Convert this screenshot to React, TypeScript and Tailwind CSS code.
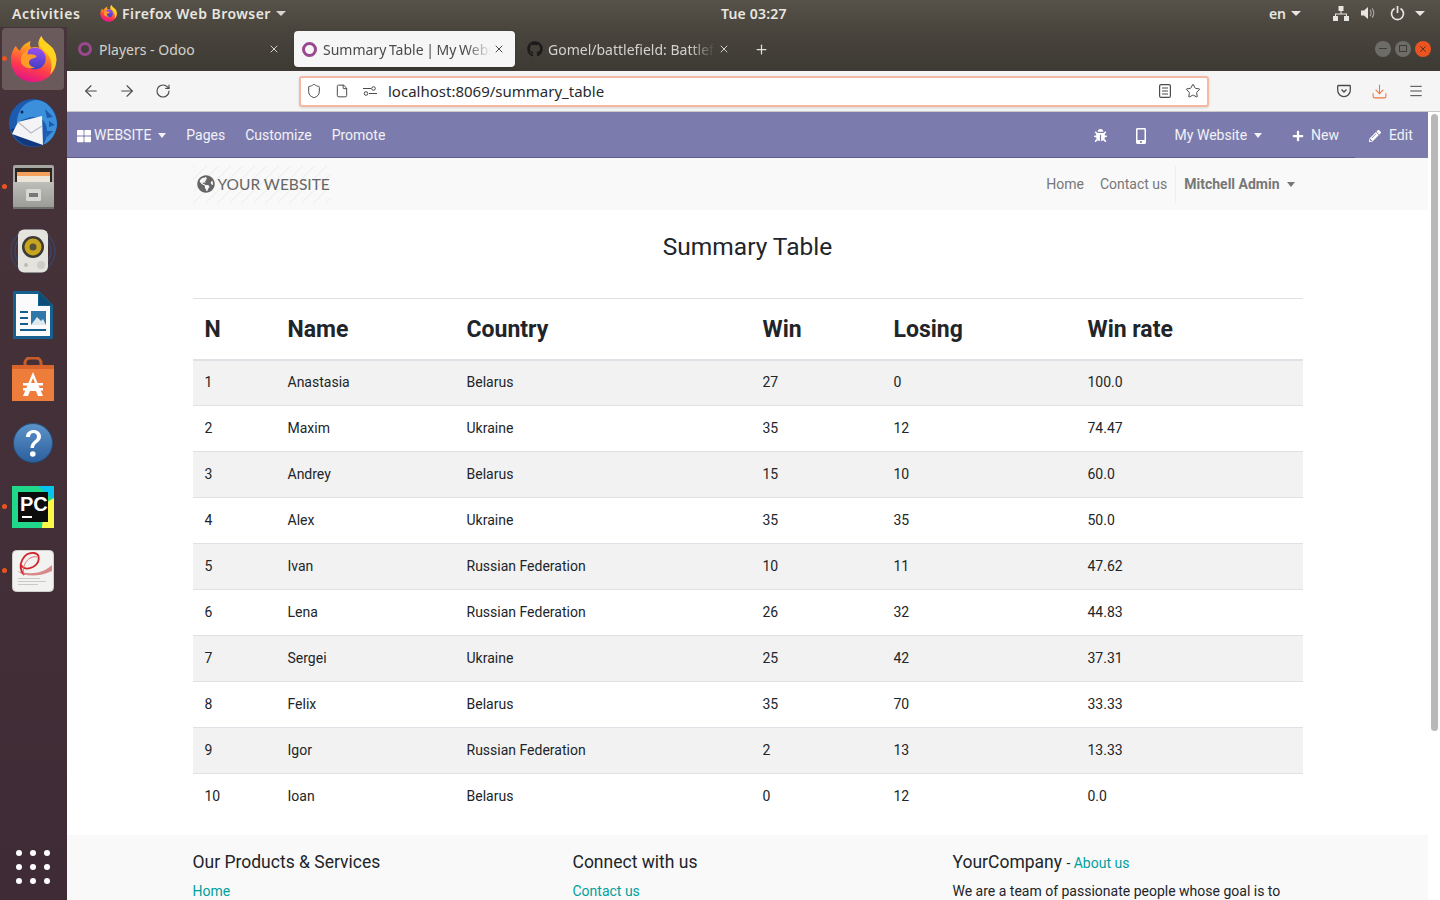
import { ArrowLeft, ArrowRight, RotateCw, Star, Menu, Plus, X, Shield, File, Download } from "lucide-react";
import { FaBug, FaGithub, FaGlobeAmericas, FaMobileAlt, FaPencilAlt, FaPlus, FaThLarge } from "react-icons/fa";

const rows = [
  ["1", "Anastasia", "Belarus", "27", "0", "100.0"],
  ["2", "Maxim", "Ukraine", "35", "12", "74.47"],
  ["3", "Andrey", "Belarus", "15", "10", "60.0"],
  ["4", "Alex", "Ukraine", "35", "35", "50.0"],
  ["5", "Ivan", "Russian Federation", "10", "11", "47.62"],
  ["6", "Lena", "Russian Federation", "26", "32", "44.83"],
  ["7", "Sergei", "Ukraine", "25", "42", "37.31"],
  ["8", "Felix", "Belarus", "35", "70", "33.33"],
  ["9", "Igor", "Russian Federation", "2", "13", "13.33"],
  ["10", "Ioan", "Belarus", "0", "12", "0.0"],
];

const headers = ["N", "Name", "Country", "Win", "Losing", "Win rate"];
const colWidths = ["w-[83px]", "w-[179px]", "w-[296px]", "w-[131px]", "w-[194px]", "w-[227px]"];

function Caret({ className = "", wide = false }: { className?: string; wide?: boolean }) {
  const size = wide ? "border-x-[5px] border-t-[5px]" : "border-x-[4.5px] border-t-[5px]";
  return <span className={`inline-block w-0 h-0 border-x-transparent border-t-current ${size} ${className}`} />;
}

function FirefoxLogo({ size, id }: { size: number; id: string }) {
  return (
    <svg width={size} height={size} viewBox="0 0 48 48">
      <defs>
        <linearGradient id={`${id}a`} x1="0.75" y1="0" x2="0.4" y2="1">
          <stop offset="0" stopColor="#ffe226" />
          <stop offset="0.35" stopColor="#ff9a1f" />
          <stop offset="0.7" stopColor="#ff3d4a" />
          <stop offset="1" stopColor="#e31587" />
        </linearGradient>
        <linearGradient id={`${id}b`} x1="0.5" y1="0" x2="0.4" y2="1">
          <stop offset="0" stopColor="#9a4ff0" />
          <stop offset="1" stopColor="#3f3fc0" />
        </linearGradient>
      </defs>
      <path
        d="M1 25C1 18 3 14 6 10 7 12 8 14 10 15 12 10 16 7 21 5 20 8 20 11 22 12 24 11 27 11 30 12 28 8 29 4 32 0 34 6 40 8 44 13 47 18 48 23 47 28 46 39 36 47 24 47 11 47 1 37 1 25Z"
        fill={`url(#${id}a)`}
      />
      <path d="M32 0c2 6 8 8 12 13 3 5 4 10 3 15-1 4-3 8-6 11 2-6 2-13-1-18-2-4-7-6-9-11-1-3 0-7 1-10z" fill="#ffd21f" />
      <circle cx="25.500" cy="23" r="11" fill={`url(#${id}b)`} />
      <path d="M11 25c0-6 4-10 9-12-2 2-2 5-2 6 3-1 9 0 9 2-1 2-6 2-7 4-2 3 1 7 6 7-7 3-15-1-15-7z" fill="#ff9b26" />
    </svg>
  );
}

function DockIcon({ name }: { name: string }) {
  if (name === "firefox") return <FirefoxLogo size={47} id="dockff" />;
  if (name === "thunderbird")
    return (
      <svg width="48" height="48" viewBox="0 0 48 48">
        <circle cx="24" cy="24" r="24" fill="#1c5bb0" />
        <path d="M8 24C8 10 18 1 28 1c10 1 19 11 20 23 0 10-6 19-14 22 4-6 5-13 3-20C34 18 24 14 8 24z" fill="#3c8fdb" />
        <path d="M36 10l8 8-6 1zM40 22l6 4-6 2zM38 32l6 0-6 6z" fill="#1c5bb0" />
        <path d="M2 30c2 8 9 15 18 17 6 1 12 0 16-2-10 0-22-5-29-16z" fill="#12397e" />
        <path d="M3 35l6-12 24-6 1 29z" fill="#f4f4f6" />
        <path d="M9 23l13 11 11-7" fill="none" stroke="#b9bcc8" strokeWidth="1.300" />
        <circle cx="13" cy="13" r="1.500" fill="#0e2a5a" />
      </svg>
    );
  if (name === "files")
    return (
      <svg width="41" height="44" viewBox="0 0 41 44">
        <defs>
          <linearGradient id="cab" x1="0" y1="0" x2="0" y2="1">
            <stop offset="0" stopColor="#bdbdba" />
            <stop offset="1" stopColor="#9a9a97" />
          </linearGradient>
        </defs>
        <rect width="41" height="43" rx="2" fill="#a5a5a2" />
        <rect x="2" y="3" width="37" height="14" fill="#2a2520" />
        <rect x="4" y="7" width="33" height="4" fill="#f5a05a" />
        <rect x="4" y="11" width="33" height="6" fill="#ece4d6" />
        <rect y="17" width="41" height="26" fill="url(#cab)" />
        <rect x="13" y="24" width="15" height="12" rx="1.500" fill="#d7d7d4" />
        <rect x="16" y="28" width="9" height="4" fill="#77777a" />
        <rect y="42" width="41" height="2" fill="#6e6e6c" />
      </svg>
    );
  if (name === "speaker")
    return (
      <svg width="50" height="44" viewBox="0 0 50 44">
        <circle cx="25" cy="22" r="22" fill="none" stroke="#3a4a6c" strokeWidth="1.500" opacity="0.7" />
        <circle cx="25" cy="22" r="18" fill="none" stroke="#3a4a6c" strokeWidth="1.500" opacity="0.8" />
        <rect x="10" y="0.500" width="30" height="43" rx="6" fill="#e5e3de" />
        <circle cx="25" cy="18" r="11" fill="#3c3a33" />
        <circle cx="25" cy="18" r="8.500" fill="#c7a51f" />
        <circle cx="25" cy="18" r="3.500" fill="#57523a" />
        <circle cx="33" cy="36" r="4" fill="#cfcdc8" />
        <circle cx="18" cy="36" r="2" fill="#bdbbb5" />
      </svg>
    );
  if (name === "writer")
    return (
      <svg width="40" height="48" viewBox="0 0 40 48">
        <path d="M0 0h26l14 14v34H0z" fill="#15608f" />
        <path d="M3 3h22v12h12v30H3z" fill="#fbfbfb" />
        <path d="M26 1l13 13H26z" fill="#0d4e79" />
        <rect x="7" y="20" width="8" height="2" fill="#15608f" />
        <rect x="7" y="26" width="8" height="2" fill="#15608f" />
        <rect x="7" y="32" width="8" height="2" fill="#15608f" />
        <rect x="7" y="38" width="26" height="2" fill="#15608f" />
        <rect x="18" y="20" width="15" height="14" fill="#2f78a8" />
        <path d="M18 34l6-8 4 4 2-2 3 6z" fill="#dfe9ef" />
      </svg>
    );
  if (name === "store")
    return (
      <svg width="42" height="44" viewBox="0 0 42 44">
        <path d="M13 10V6a5 5 0 0 1 5-5h6a5 5 0 0 1 5 5v4" fill="none" stroke="#c85d2c" strokeWidth="3" />
        <path d="M0 8h42v36H0z" fill="#ee7c3b" />
        <path d="M0 8h42v4H0z" fill="#d9652c" />
        <path d="M21 15l-10 24h5l2-5h6l2 5h5z" fill="#fff" />
        <rect x="11" y="26" width="20" height="2.500" fill="#fff" />
        <rect x="11" y="31" width="20" height="2.500" fill="#fff" />
        <path d="M21 21l-2 5h4z" fill="#ee7c3b" />
      </svg>
    );
  if (name === "help")
    return (
      <svg width="40" height="40" viewBox="0 0 40 40">
        <defs>
          <linearGradient id="hlp" x1="0" y1="0" x2="0" y2="1">
            <stop offset="0" stopColor="#5c93c8" />
            <stop offset="1" stopColor="#2c5f9e" />
          </linearGradient>
        </defs>
        <circle cx="20" cy="20" r="19.500" fill="url(#hlp)" stroke="#23507f" />
        <path d="M13 14c0-5 4-7 7.500-7 4 0 7.500 2.500 7.500 6.500 0 6-7 6-7 11.500h-3.500c0-7 6.500-7 6.500-11.500 0-2-1.500-3.500-3.500-3.500-2.500 0-3.500 2-3.500 4z" fill="#fff" />
        <circle cx="19.800" cy="31" r="2.800" fill="#fff" />
      </svg>
    );
  if (name === "pycharm")
    return (
      <svg width="42" height="42" viewBox="0 0 42 42">
        <rect width="42" height="42" fill="#21d789" />
        <path d="M26 0h16v14z" fill="#07c3f2" />
        <path d="M30 42h12V12l-10 6z" fill="#fcf84a" />
        <rect x="6" y="6" width="30" height="30" fill="#0c0c0c" />
        <text x="8" y="25" fontFamily="Liberation Sans, sans-serif" fontWeight="700" fontSize="20" fill="#fff">PC</text>
        <rect x="10" y="30" width="10" height="2" fill="#fff" />
      </svg>
    );
  return (
    <svg width="42" height="42" viewBox="0 0 42 42">
      <rect x="0.500" y="0.500" width="41" height="41" rx="4" fill="#f2f2f0" stroke="#cfcfcc" />
      <path d="M40 15C30 24 18 25 5 21c8 6 22 6 35 0z" fill="#d8898a" />
      <path d="M12 25C4 15 12 2 22 3c7 1 6 10-1 14-6 3-10 1-12-2" fill="none" stroke="#d0262c" strokeWidth="1.800" />
      <path d="M12 25c-3-10 5-20 13-18" fill="none" stroke="#e26a6a" strokeWidth="1" />
      <rect x="6" y="28" width="22" height="1" fill="#c9c9c6" />
      <rect x="6" y="31" width="28" height="1" fill="#c9c9c6" />
      <rect x="6" y="34" width="20" height="1" fill="#c9c9c6" />
    </svg>
  );
}

const dockItems = [
  { name: "firefox", run: true, active: true },
  { name: "thunderbird", run: false, active: false },
  { name: "files", run: true, active: false },
  { name: "speaker", run: false, active: false },
  { name: "writer", run: false, active: false },
  { name: "store", run: false, active: false },
  { name: "help", run: false, active: false },
  { name: "pycharm", run: true, active: false },
  { name: "evince", run: true, active: false },
];

function Dock() {
  return (
    <aside className="w-[67px] shrink-0 bg-gradient-to-b from-[#47343a] to-[#3f2b35] flex flex-col pb-[16px]">
      {dockItems.map((item) => (
        <div key={item.name} className="relative w-full h-[64px] flex items-center justify-center pr-[1px]">
          {item.active && <div className="absolute left-[2px] top-[1px] w-[62px] h-[62px] rounded bg-[#6b5a5b]" />}
          {item.run && <span className="absolute left-[2px] top-[29px] w-[5px] h-[5px] rounded-full bg-[#e95420]" />}
          <div className="relative flex items-center justify-center">
            <DockIcon name={item.name} />
          </div>
        </div>
      ))}
      <div className="mt-auto ml-[16px] grid grid-cols-[6px_6px_6px] gap-[8px]">
        {Array.from({ length: 9 }).map((_, i) => (
          <span key={i} className="w-[6px] h-[6px] rounded-full bg-white" />
        ))}
      </div>
    </aside>
  );
}

function TopBar() {
  return (
    <header className="h-[27px] shrink-0 flex items-center bg-gradient-to-b from-[#57534a] to-[#4a463e] text-[#e8e6e0] text-[14px] font-semibold font-['Noto_Sans',sans-serif] pb-[1px]">
      <span className="ml-[12px] w-[88px] tracking-[0.6px]">Activities</span>
      <FirefoxLogo size={17} id="barff" />
      <span className="ml-[5px] tracking-[0.45px]">Firefox Web Browser</span>
      <Caret wide className="ml-[5px] text-[#d8d6d0]" />
      <span className="absolute left-[721px] top-[3px] text-[14px] tracking-[0.2px]">Tue 03:27</span>
      <div className="ml-auto flex items-center pr-[15px]">
        <span>en</span>
        <Caret wide className="ml-[5px] mr-[32px]" />
        <svg width="16" height="15" viewBox="0 0 16 15" fill="#e8e6e0">
          <rect x="5.500" y="0" width="5" height="5" />
          <rect x="0" y="10" width="5" height="5" />
          <rect x="11" y="10" width="5" height="5" />
          <path d="M7.500 5h1v2.500H14V10h-1V8.500H3V10H2V7.500h5.500z" />
        </svg>
        <svg className="ml-[12px]" width="15" height="14" viewBox="0 0 15 14" fill="#e8e6e0">
          <path d="M0 4.500h3L7 1v12L3 9.500H0z" />
          <path d="M9 4c1.500 1.500 1.500 4.500 0 6M11 2.500c2.500 2.500 2.500 6.500 0 9" fill="none" stroke="#a5a39c" strokeWidth="1.200" />
        </svg>
        <svg className="ml-[14px]" width="15" height="15" viewBox="0 0 15 15" fill="none" stroke="#e8e6e0" strokeWidth="1.700">
          <path d="M4.500 2.500a6 6 0 1 0 6 0M7.500 0v7" />
        </svg>
        <Caret wide className="ml-[10px]" />
      </div>
    </header>
  );
}

function Tabs() {
  return (
    <div className="h-[44px] shrink-0 bg-gradient-to-b from-[#4a463e] to-[#3d3a34] flex items-center font-['Noto_Sans',sans-serif] text-[14px]">
      <div className="w-[227px] h-[36px] flex items-center pl-[11px] pr-[14px] text-[#d4d2cc]">
        <span className="w-[14px] h-[14px] rounded-full border-[3px] border-[#98498f] shrink-0" />
        <span className="ml-[7px] flex-1">Players - Odoo</span>
        <X size={12} />
      </div>
      <div className="w-[221px] h-[36px] bg-[#f6f6f6] rounded-[4px] flex items-center pl-[8px] pr-[10px] text-[#4a4a4a] shadow">
        <span className="w-[15px] h-[15px] rounded-full border-[3px] border-[#98498f] shrink-0" />
        <span className="ml-[6px] flex-1 whitespace-nowrap overflow-hidden [word-spacing:-1px] [mask-image:linear-gradient(to_right,black_85%,transparent)]">Summary Table | My Website</span>
        <X size={12} className="ml-[2px] shrink-0" />
      </div>
      <div className="w-[222px] h-[36px] flex items-center pl-[12px] pr-[7px] text-[#d4d2cc]">
        <FaGithub size={16} className="shrink-0 text-[#1b1b1b]" />
        <span className="ml-[5px] flex-1 min-w-0 whitespace-nowrap overflow-hidden [mask-image:linear-gradient(to_right,black_85%,transparent)]">Gomel/battlefield: Battlefield</span>
        <X size={12} className="shrink-0 ml-[3px]" />
      </div>
      <Plus size={15} className="ml-[17px] text-[#e0ded8]" />
      <div className="ml-auto mr-[9px] flex items-center gap-[4px] pb-[1px]">
        <span className="w-[16px] h-[16px] rounded-full bg-[#6e6c66] flex items-center justify-center">
          <span className="w-[8px] h-[1.500px] bg-[#3e3c37]" />
        </span>
        <span className="w-[16px] h-[16px] rounded-full bg-[#6e6c66] flex items-center justify-center">
          <span className="w-[8px] h-[7px] border border-[#3e3c37]" />
        </span>
        <span className="w-[16px] h-[16px] rounded-full bg-[#e95420] flex items-center justify-center">
          <X size={10} strokeWidth={2} className="text-[#4a2a1c]" />
        </span>
      </div>
    </div>
  );
}

function NavBar() {
  return (
    <div className="h-[41px] shrink-0 bg-[#f5f5f5] border-b border-[#c9c9c9] flex items-center text-[#4a4a4f] font-['Noto_Sans',sans-serif]">
      <ArrowLeft size={18} strokeWidth={1.500} className="ml-[15px]" />
      <ArrowRight size={18} strokeWidth={1.500} className="ml-[18px]" />
      <RotateCw size={16} strokeWidth={1.700} className="ml-[19px]" />
      <div className="ml-[128px] w-[910px] shrink-0 h-[31px] bg-white border-2 border-[#f5b8a4] rounded-[3px] flex items-center pl-[5px] pr-[6px] shadow-sm">
        <Shield size={16} strokeWidth={1.500} />
        <File size={14} strokeWidth={1.700} className="ml-[13px]" />
        <svg className="ml-[14px]" width="14" height="10" viewBox="0 0 14 10" fill="none" stroke="#4a4a4f">
          <circle cx="10.500" cy="2.500" r="1.800" />
          <path d="M0 2.500h8M6 7.500h8" />
          <circle cx="3" cy="7.500" r="1.800" />
        </svg>
        <span className="ml-[11px] text-[15px] text-[#2a2a2e]">localhost:8069/summary_table</span>
        <svg className="ml-auto" width="12" height="14" viewBox="0 0 12 14" fill="none" stroke="#4a4a4f" strokeWidth="1.200">
          <rect x="0.600" y="0.600" width="10.800" height="12.800" rx="1.500" />
          <path d="M3 4h6M3 7h6M3 10h6" />
        </svg>
        <Star size={16} strokeWidth={1.500} className="ml-[14px]" />
      </div>
      <div className="ml-auto flex items-center pr-[16px]">
        <svg width="14" height="14" viewBox="0 0 14 14" fill="none" stroke="#4a4a4f" strokeWidth="1.300">
          <path d="M1.500 1.500h11c.5 0 .8.300.8.800v4a6.300 6.300 0 0 1-12.600 0v-4c0-.5.300-.8.800-.8z" />
          <path d="M4.500 5.500L7 8l2.500-2.500" />
        </svg>
        <Download size={17} strokeWidth={1.500} className="ml-[20px] text-[#f0773f]" />
        <Menu size={16} strokeWidth={1.500} className="ml-[20px]" />
      </div>
    </div>
  );
}

function WebsiteBar() {
  return (
    <div className="h-[46px] shrink-0 bg-[#7c7bad] flex text-[14px] text-white/90 font-['Roboto',sans-serif]">
      <div className="flex-1 flex items-center border-b border-[#5d5b8f] pt-[2px] pr-[16px]">
        <FaThLarge size={14} className="ml-[10px] text-white" />
        <span className="ml-[3px]">WEBSITE</span>
        <Caret className="ml-[7px]" />
        <span className="ml-[20px]">Pages</span>
        <span className="ml-[20px]">Customize</span>
        <span className="ml-[20px]">Promote</span>
        <div className="ml-auto flex items-center">
          <FaBug size={13} className="text-white" />
          <FaMobileAlt size={16} className="ml-[26px] text-white" />
          <span className="ml-[26px]">My Website</span>
          <Caret className="ml-[7px]" />
          <FaPlus size={12} className="ml-[30px] text-white" />
          <span className="ml-[7px]">New</span>
        </div>
      </div>
      <div className="w-[73px] flex items-center pl-[14px] pt-[1px]">
        <FaPencilAlt size={12} className="text-white" />
        <span className="ml-[8px]">Edit</span>
      </div>
    </div>
  );
}

function SiteNav() {
  return (
    <nav className="h-[52px] shrink-0 bg-[#f9f9f9] flex items-center text-[14px] text-[#777] font-['Roboto',sans-serif]">
      <div className="w-[1110px] mx-auto flex items-center">
        <div className="h-[37px] w-[138px] flex items-center pl-[4px] bg-[repeating-linear-gradient(135deg,#f1f1f1_0,#f1f1f1_1.5px,transparent_1.5px,transparent_8.5px)]">
          <FaGlobeAmericas size={18} className="text-[#666]" />
          <span className="ml-[3px] pt-[1px] text-[15.500px] text-[#666] font-['Lato',sans-serif] whitespace-nowrap">YOUR WEBSITE</span>
        </div>
        <div className="ml-auto flex items-center">
          <span>Home</span>
          <span className="ml-[16px] pr-[8px]">Contact us</span>
          <span className="h-[37px] border-l border-[#eeeeee] flex items-center pl-[8px] font-bold">Mitchell Admin</span>
          <Caret className="ml-[7px] mr-[8px]" />
        </div>
      </div>
    </nav>
  );
}

function SummaryTable() {
  return (
    <main className="bg-white h-[625px] shrink-0 font-['Roboto',sans-serif] text-[#212529]">
      <div className="w-[1110px] mx-auto">
        <h1 className="text-[24.500px] leading-[29px] text-center pt-[22px] h-[88px]">Summary Table</h1>
        <table className="w-full table-fixed border-collapse text-[14px]">
          <thead>
            <tr className="h-[61px] border-t border-[#dee2e6] border-b-2">
              {headers.map((h, i) => (
                <th key={h} className={`${colWidths[i]} px-[12px] pt-[2px] text-left text-[23px] font-bold`}>
                  {h}
                </th>
              ))}
            </tr>
          </thead>
          <tbody>
            {rows.map((row, i) => (
              <tr key={row[0]} className={`h-[46px] border-t border-[#dee2e6] first:border-t-0 ${i % 2 === 0 ? "bg-[#f2f2f2]" : "bg-white"}`}>
                {row.map((cell, j) => (
                  <td key={j} className="px-[12px]">
                    {cell}
                  </td>
                ))}
              </tr>
            ))}
          </tbody>
        </table>
      </div>
    </main>
  );
}

function Footer() {
  return (
    <footer className="flex-1 bg-[#f9f9f9] font-['Roboto',sans-serif] text-[#212529] text-[14px]">
      <div className="w-[1110px] mx-auto grid grid-cols-[380px_380px_350px] pt-[16px]">
        <div>
          <h5 className="text-[17.500px] leading-[22px]">Our Products &amp; Services</h5>
          <p className="mt-[8px] text-[#00a09d]">Home</p>
        </div>
        <div>
          <h5 className="text-[17.500px] leading-[22px]">Connect with us</h5>
          <p className="mt-[8px] text-[#00a09d]">Contact us</p>
        </div>
        <div>
          <h5 className="text-[17.500px] leading-[22px]">
            YourCompany <span className="text-[14px]">- </span>
            <span className="text-[14px] text-[#00a09d]">About us</span>
          </h5>
          <p className="mt-[7px]">We are a team of passionate people whose goal is to</p>
        </div>
      </div>
    </footer>
  );
}

export default function App() {
  return (
    <div className="relative w-[1440px] h-[900px] overflow-hidden flex flex-col bg-white">
      <TopBar />
      <div className="flex flex-1 min-h-0">
        <Dock />
        <div className="flex-1 min-w-0 flex flex-col">
          <Tabs />
          <NavBar />
          <div className="flex-1 min-h-0 flex">
            <div className="flex-1 min-w-0 flex flex-col overflow-hidden">
              <WebsiteBar />
              <SiteNav />
              <SummaryTable />
              <Footer />
            </div>
            <div className="w-[12px] shrink-0 bg-white pt-[2px] pl-[3px]">
              <div className="w-[7px] h-[617px] rounded-full bg-[#b8b8b8]" />
            </div>
          </div>
        </div>
      </div>
    </div>
  );
}
